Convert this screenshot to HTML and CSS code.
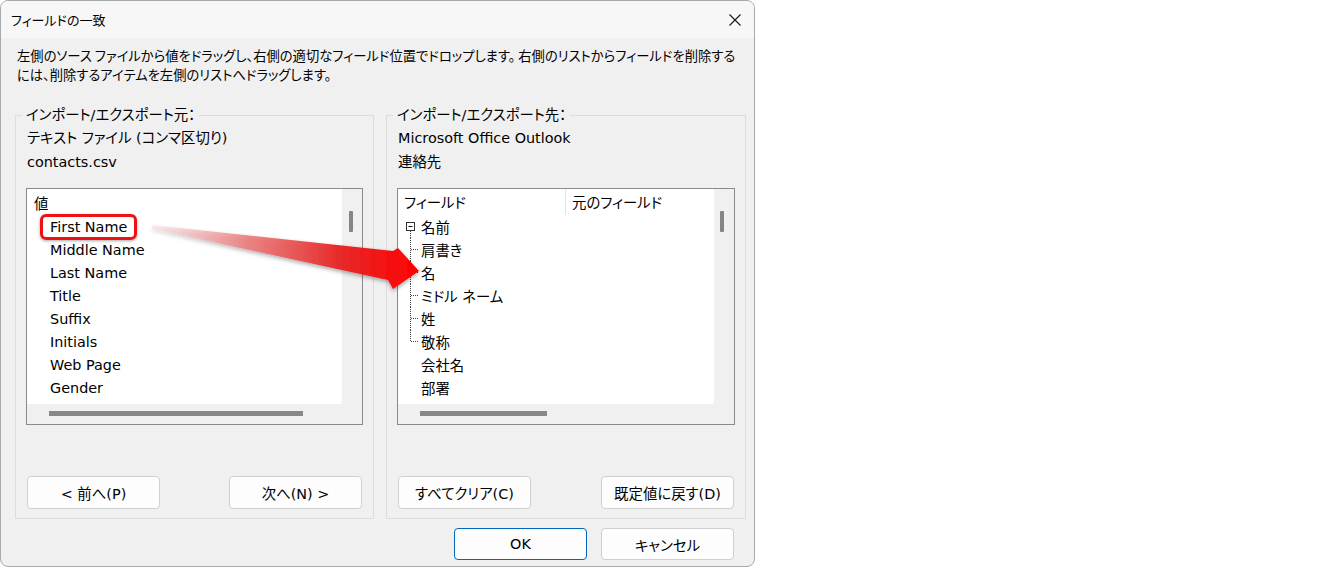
FILE: index.html
```html
<!DOCTYPE html>
<html lang="ja">
<head>
<meta charset="utf-8">
<title>フィールドの一致</title>
<link rel="stylesheet" href="styles.css">
</head>
<body>
<div class="dialog">
  <div class="titlebar">
    <span class="title">フィールドの一致</span>
    <svg class="close" width="12" height="12" viewBox="0 0 12 12"><path d="M0.5 0.5 L11.5 11.5 M11.5 0.5 L0.5 11.5" stroke="#1a1a1a" stroke-width="1.1" fill="none"/></svg>
  </div>
  <div class="content">
    <p class="intro">左側のソース ファイルから値をドラッグし、右側の適切なフィールド位置でドロップします。 右側のリストからフィールドを削除する<br>には、削除するアイテムを左側のリストへドラッグします。</p>
    <div class="groups">
      <fieldset class="group group-left">
        <legend>インポート/エクスポート元：</legend>
        <div class="info">テキスト ファイル (コンマ区切り)</div>
        <div class="info">contacts.csv</div>
        <div class="listbox">
          <div class="list-content">
            <div class="row row-head">値</div>
            <div class="row row-item"><span class="highlight">First Name</span></div>
            <div class="row row-item">Middle Name</div>
            <div class="row row-item">Last Name</div>
            <div class="row row-item">Title</div>
            <div class="row row-item">Suffix</div>
            <div class="row row-item">Initials</div>
            <div class="row row-item">Web Page</div>
            <div class="row row-item">Gender</div>
          </div>
          <div class="vscroll"><div class="vthumb"></div></div>
          <div class="hscroll"><div class="hthumb hthumb-left"></div></div>
          <div class="corner"></div>
        </div>
        <div class="btnrow">
          <button class="btn">&lt; 前へ(P)</button>
          <button class="btn">次へ(N) &gt;</button>
        </div>
      </fieldset>
      <fieldset class="group group-right">
        <legend>インポート/エクスポート先：</legend>
        <div class="info">Microsoft Office Outlook</div>
        <div class="info">連絡先</div>
        <div class="listbox">
          <div class="list-content">
            <div class="tree-header">
              <div class="col col-1">フィールド</div>
              <div class="col col-2">元のフィールド</div>
            </div>
            <div class="trow">
              <svg class="tcell" width="17" height="23" viewBox="0 0 17 23"><rect x="2.5" y="7.5" width="8" height="8" fill="#fff" stroke="#333"/><path d="M4.5 11.5 H8.5" stroke="#111"/><path d="M6.5 16 V23" stroke="#444" stroke-dasharray="1 1"/></svg>
              <span>名前</span>
            </div>
            <div class="trow">
              <svg class="tcell" width="17" height="23" viewBox="0 0 17 23"><path d="M6.5 0 V23 M7 11.5 H15" stroke="#444" stroke-dasharray="1 1"/></svg>
              <span>肩書き</span>
            </div>
            <div class="trow">
              <svg class="tcell" width="17" height="23" viewBox="0 0 17 23"><path d="M6.5 0 V23 M7 11.5 H15" stroke="#444" stroke-dasharray="1 1"/></svg>
              <span>名</span>
            </div>
            <div class="trow">
              <svg class="tcell" width="17" height="23" viewBox="0 0 17 23"><path d="M6.5 0 V23 M7 11.5 H15" stroke="#444" stroke-dasharray="1 1"/></svg>
              <span>ミドル ネーム</span>
            </div>
            <div class="trow">
              <svg class="tcell" width="17" height="23" viewBox="0 0 17 23"><path d="M6.5 0 V23 M7 11.5 H15" stroke="#444" stroke-dasharray="1 1"/></svg>
              <span>姓</span>
            </div>
            <div class="trow">
              <svg class="tcell" width="17" height="23" viewBox="0 0 17 23"><path d="M6.5 0 V12 M7 11.5 H15" stroke="#444" stroke-dasharray="1 1"/></svg>
              <span>敬称</span>
            </div>
            <div class="trow">
              <span class="tcell-empty"></span>
              <span>会社名</span>
            </div>
            <div class="trow">
              <span class="tcell-empty"></span>
              <span>部署</span>
            </div>
          </div>
          <div class="vscroll"><div class="vthumb vthumb-right"></div></div>
          <div class="hscroll"><div class="hthumb hthumb-right"></div></div>
          <div class="corner"></div>
        </div>
        <div class="btnrow">
          <button class="btn">すべてクリア(C)</button>
          <button class="btn">既定値に戻す(D)</button>
        </div>
      </fieldset>
    </div>
    <div class="footer">
      <button class="btn btn-primary">OK</button>
      <button class="btn">キャンセル</button>
    </div>
  </div>
  <svg class="arrow" width="754" height="568" viewBox="0 0 754 568">
    <defs>
      <linearGradient id="ag" x1="150" y1="0" x2="420" y2="0" gradientUnits="userSpaceOnUse">
        <stop offset="0" stop-color="#f7d0d0" stop-opacity="0.35"/>
        <stop offset="0.35" stop-color="#ec7a7a" stop-opacity="0.85"/>
        <stop offset="0.7" stop-color="#e62a2a"/>
        <stop offset="1" stop-color="#ff0000"/>
      </linearGradient>
      <filter id="shadow" x="-10%" y="-30%" width="130%" height="180%">
        <feDropShadow dx="0" dy="2" stdDeviation="2" flood-color="#000" flood-opacity="0.35"/>
      </filter>
    </defs>
    <polygon points="152,225 393,251 398,248 419,271 393,289 388,280 152,229" fill="url(#ag)" filter="url(#shadow)"/>
  </svg>
</div>
</body>
</html>
```

FILE: styles.css
```css
* { box-sizing: border-box; }

html, body {
  margin: 0;
  padding: 0;
  background: #ffffff;
}

body {
  font-family: "DejaVu Sans", "Noto Sans CJK JP", sans-serif;
  font-size: 14.4px;
  color: #000;
  font-feature-settings: "palt";
}

.dialog {
  position: relative;
  width: 755px;
  height: 567px;
  background: #f0f0f0;
  border: 1px solid #a9a9a9;
  border-radius: 8px;
  overflow: hidden;
}

.titlebar {
  height: 37px;
  background: #f7f7f7;
  display: flex;
  align-items: center;
  justify-content: space-between;
  padding: 0 13px 0 10px;
}

.title {
  font-family: "Noto Sans CJK JP", sans-serif;
  font-size: 13px;
  line-height: 20px;
  margin-top: 1px;
}

.close {
  display: block;
  margin-top: 1px;
}

.content {
  padding: 0 7px 0 14px;
}

.intro {
  margin: 8px 0 0 2px;
  font-family: "Noto Sans CJK JP", sans-serif;
  font-size: 13.3px;
  line-height: 19px;
  white-space: nowrap;
}

.groups {
  display: flex;
  gap: 12px;
  margin-top: 21px;
}

.group {
  flex: none;
  margin: 0;
  padding: 0 10px 9px 10px;
  border: 1px solid #dcdcdc;
  min-width: 0;
}

.group-left { width: 359px; }
.group-right { width: 360px; }

.group legend {
  padding: 0 4px;
  margin-left: -4px;
  line-height: 20px;
  font-size: 14.4px;
}

.info {
  margin: 1px 0 0 1px;
  line-height: 24px;
  white-space: nowrap;
}
.info + .info { margin-top: 0; }

.listbox {
  margin-top: 14px;
  height: 237px;
  border: 1px solid #8a8a8a;
  background: #f0f0f0;
  display: grid;
  grid-template-columns: 1fr 20px;
  grid-template-rows: 1fr 20px;
}

.list-content {
  background: #ffffff;
  overflow: hidden;
  border-bottom-right-radius: 2px;
}

.group-left .list-content {
  padding-top: 4px;
}

.row {
  height: 23px;
  line-height: 23px;
  white-space: nowrap;
}

.row-head { padding-left: 7px; }
.row-item { padding-left: 23px; }

.highlight {
  display: inline-block;
  margin-left: -10px;
  padding: 0 7px;
  line-height: 20px;
  border: 3px solid #ee1111;
  border-radius: 6px;
  box-shadow: 0 1px 3px rgba(0, 0, 0, 0.35);
  margin-top: -2px;
}

.vscroll {
  background: #f0f0f0;
}

.vthumb {
  margin: 22px 0 0 7px;
  width: 4px;
  height: 21px;
  background: #858585;
  border-radius: 1px;
}

.vthumb-right { margin-left: 6px; }

.hscroll {
  background: #f0f0f0;
}

.hthumb {
  margin: 7px 0 0 22px;
  height: 5px;
  background: #888888;
}

.hthumb-left { width: 254px; }
.hthumb-right { width: 127px; }

.corner { background: #f0f0f0; }

.tree-header {
  display: flex;
  height: 26px;
  align-items: stretch;
}

.col {
  line-height: 26px;
  padding-top: 1px;
}

.col-1 {
  width: 168px;
  padding-left: 6px;
  border-right: 1px solid #e3e3e3;
}

.col-2 {
  padding-left: 6px;
}

.trow {
  display: flex;
  align-items: center;
  height: 23px;
  padding-left: 6px;
  white-space: nowrap;
}

.tcell, .tcell-empty {
  display: block;
  flex: none;
  width: 17px;
  height: 23px;
}

.btnrow {
  display: flex;
  justify-content: space-between;
  margin-top: 51px;
  padding: 0 1px;
}

.btn {
  width: 133px;
  height: 33px;
  background: #fdfdfd;
  border: 1px solid #d0d0d0;
  border-radius: 4px;
  font-family: "DejaVu Sans", "Noto Sans CJK JP", sans-serif;
  font-size: 14.4px;
  font-feature-settings: "palt";
  color: #000;
  padding: 0;
}

.footer {
  display: flex;
  justify-content: flex-end;
  gap: 14px;
  margin-top: 9px;
  padding-right: 13px;
}

.footer .btn { height: 32px; }

.btn-primary {
  border-color: #0067c0;
}

.arrow {
  position: absolute;
  left: -1px;
  top: -1px;
  pointer-events: none;
}
```
